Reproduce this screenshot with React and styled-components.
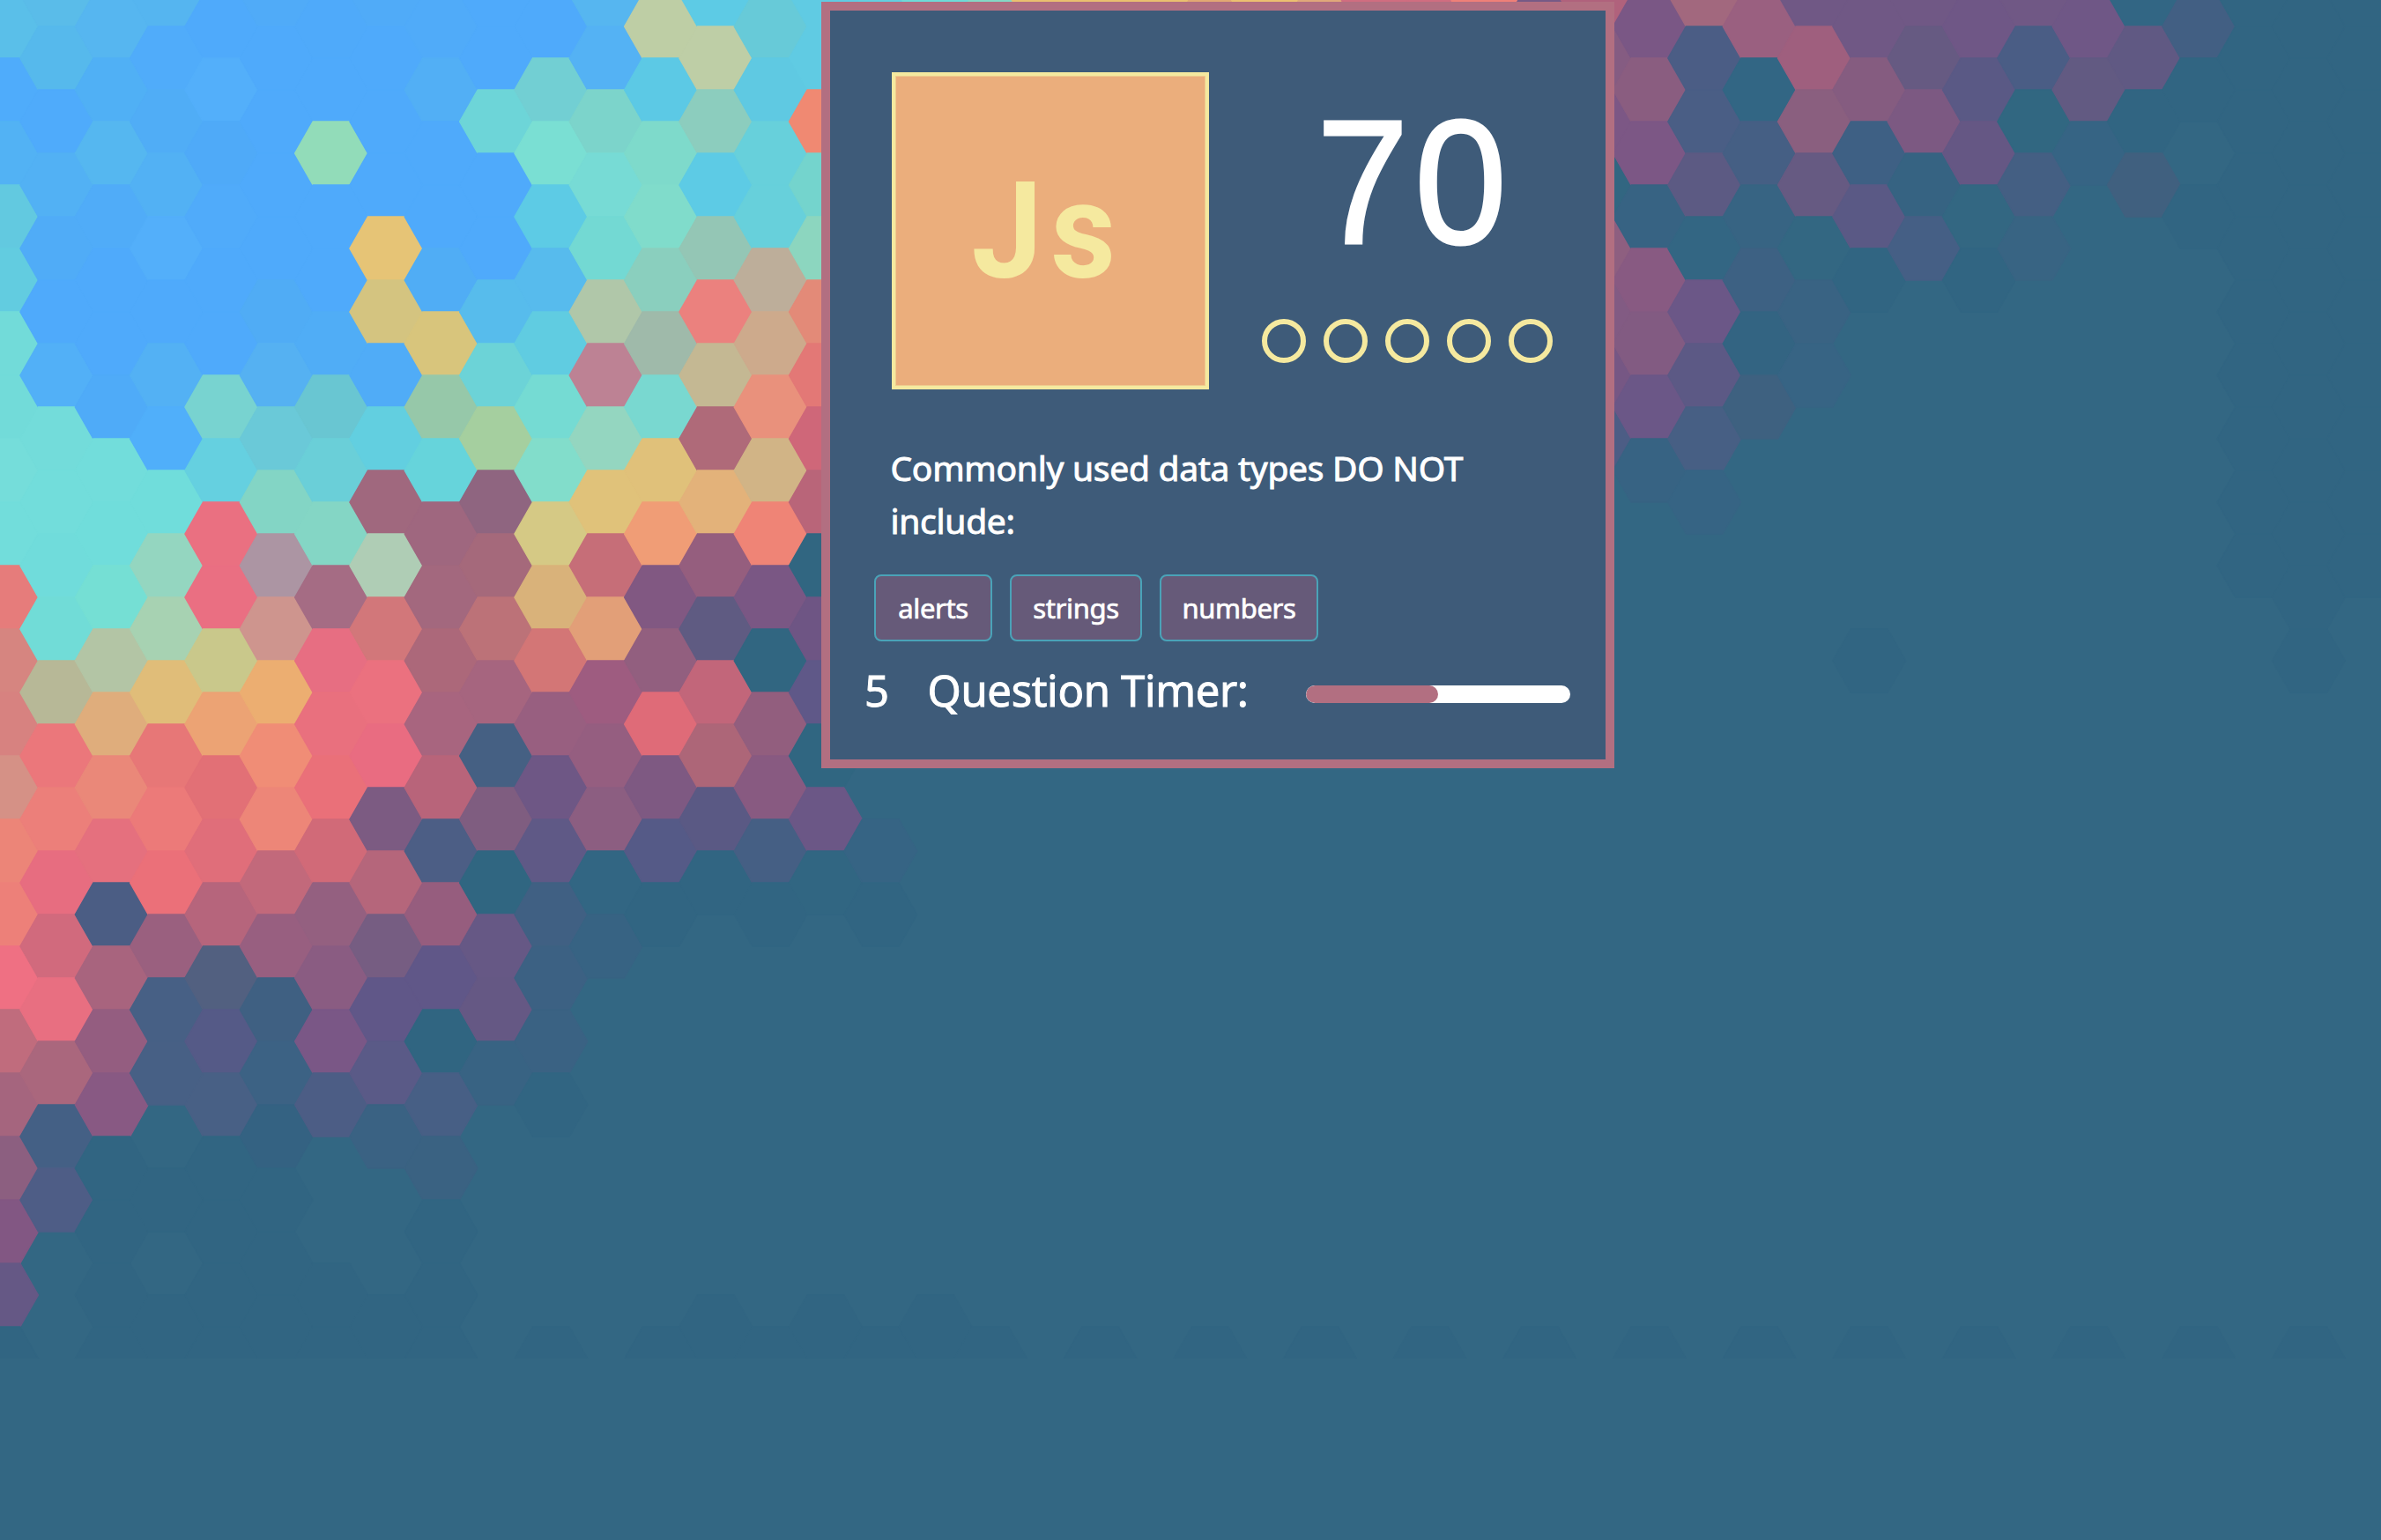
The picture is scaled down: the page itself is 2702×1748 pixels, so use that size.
import React from 'react';
import styled, { createGlobalStyle } from 'styled-components';

const GlobalStyle = createGlobalStyle`
  *, *::before, *::after { box-sizing: border-box; }
  html, body { margin: 0; padding: 0; }
  body {
    background: #336783;
    color: #fff;
    font-family: 'Noto Sans', 'Open Sans', sans-serif;
  }
`;

/* ---------- honeycomb backdrop ---------- */

const PITCH_X = 62.33;
const PITCH_Y = 72;
const SHADES = { b: '#4faafb', '.': '#316582' };

// One entry per column, colours from top to bottom. "-" leaves the backdrop showing.
const COLUMNS = {
  0: '5abfe9 4facfb 52b2f4 62c9e0 62cce0 72dbd9 72dbd9 75ddda 72dddb e67c7b d68580 d78280 d59186 ec8578 ed8079 ef7083 c06c7d a5657e 8c5f80 825783 655885 .',
  1: '5abce9 56b9ec 4fabfb 52b1f4 50acf7 b 52b0f7 73dcda 72dddb 70dcdb 71dcd7 b7b897 eb777b ec7f7a e76d80 d16a7d e86f81 aa677d 446085 4e5d86 - -',
  2: '56b6f0 50b0f5 55b7f0 50acf8 b b 4fabf8 72dddb 70dddb 75dfd4 b3c5a5 dfad7c ea8879 e5707e 4b5d84 a8647e 945d80 885983 . . . .',
  3: '55b5f0 50acfa 50adf6 52b1f4 53affa b 53b1f4 50affa 70dddb 94d6c0 a7d2b2 e0bd79 e77777 ec7a79 eb7079 9a607f 476085 476085 - . - .',
  4: 'b 53affa 4faaf8 50abfa b b 78d3d0 65d0e0 ea7081 ea6f82 c9c88b eca374 e27076 e06e7a b6657c 526080 555a87 486085 . . . .',
  5: '50abf8 b b b b 50acf5 55b1f2 6ac9d8 83d5c5 ac95a3 ce958e ecae71 f08d76 ed8678 c2697b 985f80 3f6082 3c6284 346282 . . .',
  6: '4faafa b 92dcb9 b b 50adf6 69c6d2 6acfd8 84d6c5 a56c84 e76e82 e9707e ea7079 d16a78 946080 8a5c82 7a5786 4c5d85 - - . .',
  7: '50abf8 b b b e6c476 d4c480 50acf7 62cfe0 a0687e afcdb5 d2777a eb717f e96c81 7c5b82 b5667b 765d82 605788 5a5a87 3a6283 - - .',
  8: '50abf9 52aff5 b b 50adf5 d8c57c 96c8a9 66d4db 9f677f a3687e ac687a a8657f b8647a 4c5e85 965d7e 605788 306581 475f85 3a6282 . . .',
  9: 'b b 6dd5d8 b b 57bcec 6cd3d7 a5cf9f 8f6580 a5697b bc7278 a6657f 456083 7f5d80 306681 665885 655884 386383',
  10: 'b 72cfd3 7adfd3 5dcbe5 57bbed 60cce1 75dbd3 82ddcb d5c985 d9b27a d37676 985f80 6e5785 5f5986 406083 3c6183 3a6283 . - - - .',
  11: '56b6f0 54b2f4 7cd4cb 77dbd5 73d9d3 b0c7a9 bd8294 94d6c0 e0c27a c66e78 e29f78 9e5c80 955e80 8c5e81 326683 376383',
  12: 'becea5 5cc9e5 7edacb 80dccb 8acfbe 9fbaaa 79d8d0 e0c17a f09d76 815882 925f7f df6b78 7e5982 555a87 316582 - - - - - - .',
  13: '5dcbe5 becea6 8ccdbe 5dcbe5 94c6b5 eb817e c4b893 af6a79 e3b27a 955e7e 5f5b82 c2667a ad6678 5a5984 . - - - - - - .',
  14: '67cad8 5fc9e2 67d0db 67d0db bdae9a cdaa8c e9917c d1b486 ef8476 7a5784 316681 925e7e 885a81 455f84 . - - - - - - .',
  15: '60cbe3 60cbe3 f08972 74d4cd 8cd6bf e38a78 e37876 cf6779 b96579 316681 6e5584 5f5888 306681 6b5786 316682 - - - - - - .',
  16: '62cfe0 - - - - - - - - - - - - 366484 . - - - - - - .',
  17: '6edbd8 - - - - - - - - - - - - - - - - - - - - .',
  18: '85d8c6 - - - - - - - - - - - - - - - - - - - - .',
  19: 'eac06f',
  20: 'eac06f - - - - - - - - - - - - - - - - - - - - .',
  21: 'eac06f',
  22: 'e2a873 - - - - - - - - - - - - - - - - - - - - .',
  23: 'ecc070',
  24: 'e0a87a - - - - - - - - - - - - - - - - - - - - .',
  25: 'd06d80',
  26: 'd06d80 - - - - - - - - - - - - - - - - - - - - .',
  27: 'ef8078',
  28: '765a86 - - - - - - - - - - - - - - - - - - - - .',
  29: 'b0627c 855c82 7c5785 326681 8e5f80 825b83 765784 4c5d85',
  30: '7a5785 8a5d80 7c5785 376383 885a82 825b82 6b5787 376383 - - - - - - - - - - - - - .',
  31: 'a2687e 4b5d85 4a5e85 5c5a83 336683 6b5787 5c5985 475f84 366484',
  32: '9a6080 326684 455f84 376483 3d6183 336482 3e6180 - - - - - - - - - - - - - - .',
  33: '705885 9f5f7e 8a5f7f 665a82 336782 396383 376484',
  34: '705885 855c80 3e6084 5a5985 . - - - - - . - - - - - - - - - - .',
  35: '705885 665a82 7c5982 366382 455f85',
  36: '6f5786 5a5985 655784 336782 . - - - - - - - - - - - - - - - - .',
  37: '705885 4a5d85 316781 445f83 386483',
  38: '6f5786 625a82 366484 - - - - - - - - - - - - - - - - - - .',
  39: '326684 605983 . 40607f',
  40: '425f83 . - . - - - - - - - - - - - - - - - - - .',
  41: '. . . . . . . . . .',
  42: '. . . . . . . . . . . - - - - - - - - - - .',
  43: '. . . . . . . . . .',
};

const HEXES = Object.entries(COLUMNS).flatMap(([key, list]) => {
  const col = Number(key);
  const x = 2 + col * PITCH_X;
  const first = col % 2 === 0 ? 30 : -6;
  return list.split(' ').flatMap((code, i) => {
    if (code === '-') return [];
    const y = first + i * PITCH_Y;
    const points = [[-41.4, 0], [-20.8, -36], [20.8, -36], [41.4, 0], [20.8, 36], [-20.8, 36]]
      .map(([dx, dy]) => `${(x + dx).toFixed(1)},${y + dy}`)
      .join(' ');
    return [{ id: `${col}-${i}`, points, fill: SHADES[code] || `#${code}` }];
  });
});

const Backdrop = styled.svg`
  position: absolute;
  inset: 0;
  z-index: -1;
  width: 2702px;
  height: 1542px;
  display: block;
`;

/* ---------- card ---------- */

const Page = styled.main`
  position: relative;
  isolation: isolate;
  display: flex;
  align-items: flex-start;
  width: 2702px;
  height: 1748px;
  padding: 2px 0 0 932px;
  overflow: hidden;
`;

const Card = styled.section`
  display: flex;
  flex-direction: column;
  width: 900px;
  height: 870px;
  padding: 70px 40px 0 70px;
  border: 10px solid #b26f81;
  background: #3e5b79;
`;

const Summary = styled.header`
  display: flex;
  gap: 60px;
`;

const Logo = styled.div`
  display: flex;
  align-items: center;
  justify-content: center;
  flex: none;
  width: 360px;
  height: 360px;
  padding-right: 6px;
  border: 4px solid #f5e99f;
  box-shadow: inset 0 0 0 1px #f0cc8e;
  background: #ebae7c;
`;

const Monogram = styled.span`
  color: #f5e99f;
  font: 700 153px/1 Roboto, sans-serif;
  letter-spacing: 10px;
  transform: scaleX(0.94);
`;

const Scoreboard = styled.div`
  display: flex;
  flex-direction: column;
  width: 330px;
  padding-top: 25px;
`;

const Score = styled.div`
  margin: 0 0 55px 62px;
  font: 400 200px/200px 'Liberation Sans', Arial, sans-serif;
  letter-spacing: 7px;
  transform: scaleX(0.94);
  transform-origin: left center;
  -webkit-text-stroke: 3px #fff;
`;

const Dots = styled.div`
  display: flex;
  gap: 20px;
`;

const Dot = styled.span`
  width: 50px;
  height: 50px;
  border: 6px solid #f5e99f;
  border-radius: 50%;
  background: ${(p) => (p.$filled ? '#f5e99f' : 'transparent')};
`;

const Question = styled.p`
  width: 700px;
  margin: 59px 0 31px -1.5px;
  font-size: 39px;
  line-height: 60px;
  letter-spacing: -0.28px;
  -webkit-text-stroke: 0.9px #fff;
`;

const Answers = styled.div`
  display: flex;
  gap: 20px;
  margin-left: -20px;
`;

const Answer = styled.button`
  width: ${(p) => p.$width}px;
  height: 76px;
  padding: 0;
  border: 2px solid #4aa3b8;
  border-radius: 8px;
  background: #665a79;
  color: #fff;
  font: 400 31px/72px 'Noto Sans', 'Open Sans', sans-serif;
  letter-spacing: -0.35px;
  -webkit-text-stroke: 0.7px #fff;
`;

const Footer = styled.footer`
  display: flex;
  align-items: center;
  height: 76px;
  margin: 17px 0 0 -31px;
  font-size: 49px;
  line-height: 76px;
  letter-spacing: -0.35px;
  -webkit-text-stroke: 0.9px #fff;
`;

const Seconds = styled.span`
  width: 71.5px;
`;

const TimerLabel = styled.span`
  flex: 1;
  white-space: nowrap;
`;

const Track = styled.div`
  flex: none;
  width: 300px;
  height: 20px;
  margin-top: 10px;
  border-radius: 10px;
  background: #fff;
  overflow: hidden;
`;

const Fill = styled.div`
  width: ${(p) => p.$value}%;
  height: 100%;
  border-radius: 10px;
  background: #b26f81;
`;

const ANSWERS = [
  { label: 'alerts', width: 134 },
  { label: 'strings', width: 150 },
  { label: 'numbers', width: 180 },
];

export default function App() {
  return (
    <Page>
      <GlobalStyle />
      <Backdrop viewBox="0 0 2702 1542" aria-hidden="true">
        {HEXES.map((h) => (
          <polygon key={h.id} points={h.points} fill={h.fill} stroke={h.fill} strokeWidth="1.4" />
        ))}
      </Backdrop>
      <Card>
        <Summary>
          <Logo>
            <Monogram>Js</Monogram>
          </Logo>
          <Scoreboard>
            <Score>70</Score>
            <Dots>
              {[1, 2, 3, 4, 5].map((n) => (
                <Dot key={n} $filled={false} />
              ))}
            </Dots>
          </Scoreboard>
        </Summary>
        <Question>Commonly used data types DO NOT include:</Question>
        <Answers>
          {ANSWERS.map((a) => (
            <Answer key={a.label} type="button" $width={a.width}>
              {a.label}
            </Answer>
          ))}
        </Answers>
        <Footer>
          <Seconds>5</Seconds>
          <TimerLabel>Question Timer:</TimerLabel>
          <Track>
            <Fill $value={50} />
          </Track>
        </Footer>
      </Card>
    </Page>
  );
}
